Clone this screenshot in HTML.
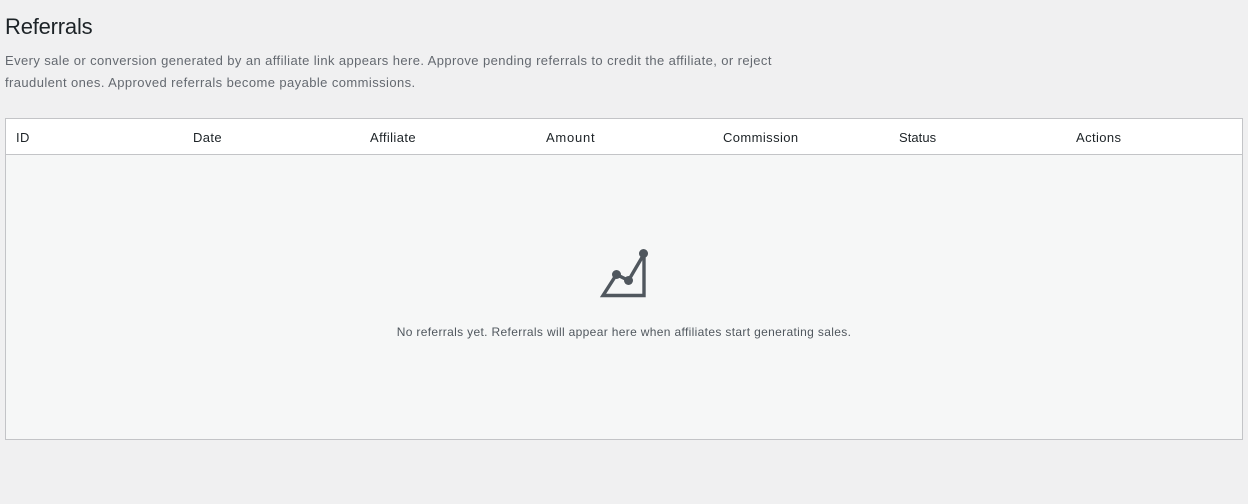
<!DOCTYPE html>
<html><head><meta charset="utf-8"><style>
html,body{margin:0;padding:0;background:#f0f0f1;width:1248px;height:504px;overflow:hidden;font-family:"Liberation Sans",sans-serif}
.t{position:absolute;white-space:nowrap}
.h{top:120px;font-size:13px;line-height:36px;color:#1d2327;letter-spacing:.4px}
</style></head><body>
<div class="t" style="left:5px;top:13px;font-size:22px;line-height:28px;color:#1d2327;letter-spacing:-.2px">Referrals</div>
<div class="t" style="left:5px;top:50px;font-size:13px;line-height:22px;color:#646970;letter-spacing:.405px">Every sale or conversion generated by an affiliate link appears here. Approve pending referrals to credit the affiliate, or reject</div>
<div class="t" style="left:5px;top:72px;font-size:13px;line-height:22px;color:#646970;letter-spacing:.415px">fraudulent ones. Approved referrals become payable commissions.</div>
<div style="position:absolute;left:5px;top:118px;width:1236px;height:320px;border:1px solid #c3c4c7;background:#f6f7f7"></div>
<div style="position:absolute;left:6px;top:119px;width:1236px;height:35px;background:#fff;border-bottom:1px solid #c3c4c7"></div>
<div class="t h" style="left:16px">ID</div>
<div class="t h" style="left:193px">Date</div>
<div class="t h" style="left:370px">Affiliate</div>
<div class="t h" style="left:546px;letter-spacing:.75px">Amount</div>
<div class="t h" style="left:723px">Commission</div>
<div class="t h" style="left:899px;letter-spacing:.05px">Status</div>
<div class="t h" style="left:1076px">Actions</div>
<svg style="position:absolute;left:590px;top:240px" width="70" height="65" viewBox="0 0 70 65">
<path d="M54 14V55.500H13L26.500 34.500L38.500 40.500L54 14" fill="none" stroke="#50575e" stroke-width="3.400"/>
<circle cx="26.500" cy="34.500" r="4.500" fill="#50575e"/><circle cx="38.500" cy="40.500" r="4.500" fill="#50575e"/><circle cx="53.500" cy="13.500" r="4.500" fill="#50575e"/>
</svg>
<div class="t" style="left:6px;width:1236px;top:322px;text-align:center;font-size:12px;line-height:20px;color:#50575e;letter-spacing:.34px">No referrals yet. Referrals will appear here when affiliates start generating sales.</div>
</body></html>
